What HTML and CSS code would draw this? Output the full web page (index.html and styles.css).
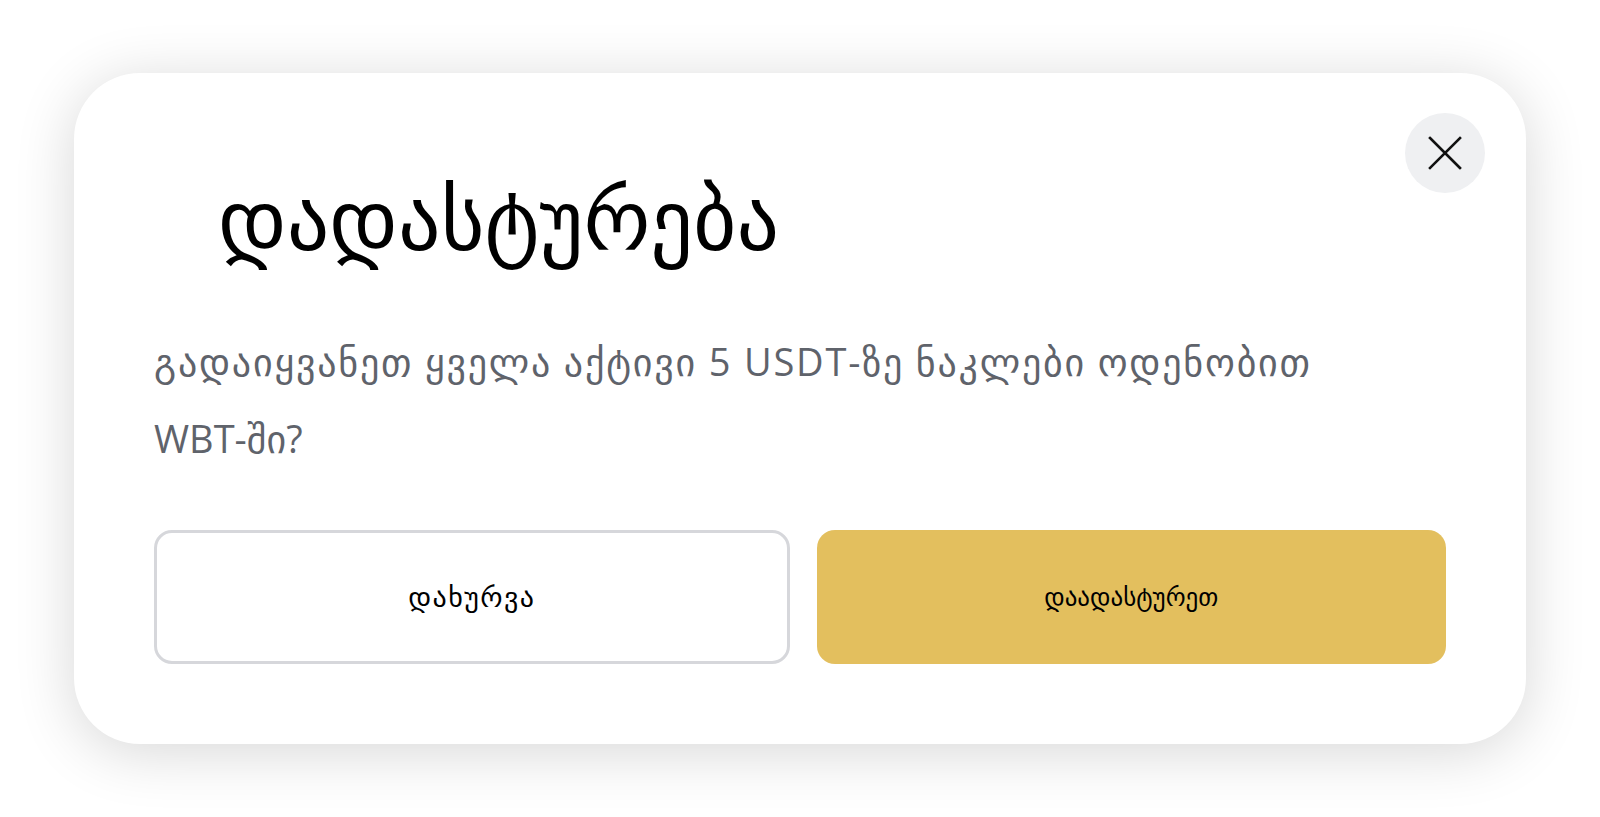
FILE: index.html
```html
<!DOCTYPE html>
<html lang="ka">
<head>
    <meta charset="UTF-8">
    <meta name="viewport" content="width=device-width, initial-scale=1.0">
    <title>დადასტურება</title>
    <link rel="stylesheet" href="styles.css">
</head>
<body>

<div class="modal">
    <!-- CLOSE -->
    <button class="close-btn" aria-label="close">
        <svg width="34" height="34" viewBox="0 0 34 34">
            <path d="M2 2 L32 32 M32 2 L2 32" stroke="#111" stroke-width="2.6" stroke-linecap="square" fill="none"/>
        </svg>
    </button>

    <h2 class="title">დადასტურება</h2>

    <p class="message">გადაიყვანეთ ყველა აქტივი 5 USDT-ზე ნაკლები ოდენობით <span class="nowrap">WBT-ში?</span></p>

    <!-- ACTIONS -->
    <div class="actions">
        <button class="btn btn-cancel">დახურვა</button>
        <button class="btn btn-confirm">დაადასტურეთ</button>
    </div>
</div>

</body>
</html>
```

FILE: styles.css
```css
body {
    margin: 0;
    padding: 73px 74px;
    background: #ffffff;
    font-family: "Open Sans", "DejaVu Sans", sans-serif;
}
.modal {
    position: relative;
    background: #ffffff;
    border-radius: 66px;
    padding: 80px;
    box-shadow: 0 8px 60px rgba(0, 0, 0, 0.16);
}
.close-btn {
    position: absolute;
    top: 40px;
    right: 41px;
    width: 80px;
    height: 80px;
    border: none;
    border-radius: 50%;
    background: #eff0f2;
    display: flex;
    align-items: center;
    justify-content: center;
    padding: 0;
    cursor: pointer;
}
.title {
    margin: 18px 0 0 64px;
    font-family: "DejaVu Sans", sans-serif;
    font-size: 84px;
    line-height: 100px;
    font-weight: normal;
    color: #000000;
}
.message {
    margin: 52px 0 0 0;
    font-size: 38px;
    letter-spacing: 1.8px;
    line-height: 77px;
    color: #5f636b;
}
.nowrap {
    white-space: nowrap;
    letter-spacing: 0;
}
.actions {
    display: flex;
    gap: 27px;
    margin-top: 53px;
}
.btn {
    flex: 1;
    height: 134px;
    border-radius: 18px;
    font-family: "DejaVu Sans", sans-serif;
    color: #000000;
    cursor: pointer;
}
.btn-cancel {
    background: #ffffff;
    border: 3px solid #d6d7db;
    font-size: 28px;
    letter-spacing: 1.4px;
}
.btn-confirm {
    background: #e3bf5e;
    border: none;
    font-size: 25px;
}
```
